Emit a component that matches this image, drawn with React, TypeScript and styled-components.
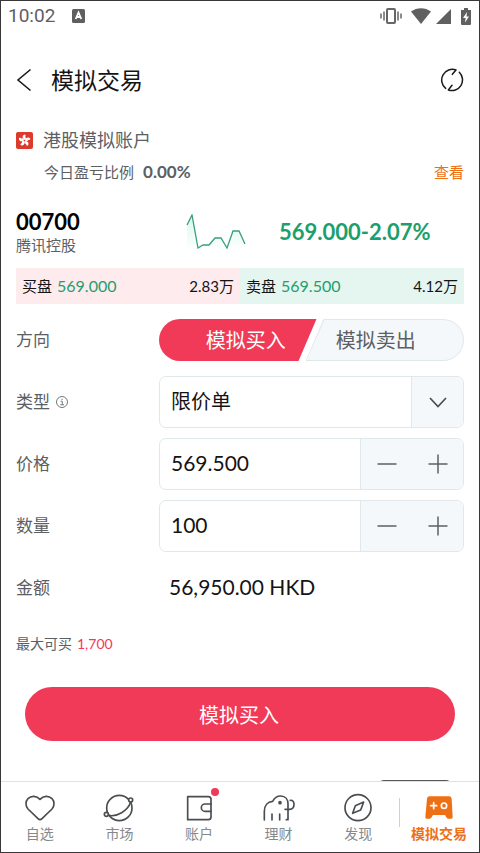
import React, { useState } from "react";
import styled, { createGlobalStyle, css } from "styled-components";

const color = {
  ink: "#141414",
  text: "#5b6064",
  muted: "#84898d",
  line: "#e1e8eb",
  panel: "#f5f8fa",
  red: "#f03a57",
  green: "#1c9f6c",
  orange: "#ee7015",
};

const GlobalStyle = createGlobalStyle`
  * { box-sizing: border-box; }
  body {
    margin: 0;
    background: #fff;
    color: ${color.ink};
    font-family: Lato, "Noto Sans CJK SC", sans-serif;
  }
  button, input, select { font: inherit; color: inherit; }
  button { padding: 0; border: 0; background: none; cursor: pointer; }
  svg { display: block; flex: none; }
`;

const Screen = styled.div`
  display: flex;
  flex-direction: column;
  height: 100vh;
  border: 1px solid #3a3739;
  background: #fff;
`;

const StatusBar = styled.div`
  flex: none;
  display: flex;
  align-items: center;
  height: 30px;
  padding: 0 8px 0 7px;
  color: #5f5f5f;
  font: 19px/30px Roboto, sans-serif;
`;

const StatusBadge = styled.svg`
  margin-left: 17px;
`;

const StatusIcons = styled.div`
  display: flex;
  align-items: center;
  gap: 5px;
  margin-left: auto;
`;

const VibrateIcon = styled.svg`
  margin-right: 3px;
`;

const BatteryIcon = styled.svg`
  margin-left: 5px;
`;

const Header = styled.header`
  flex: none;
  display: flex;
  align-items: center;
  height: 52px;
  margin-top: 23px;
  padding: 0 15px;
`;

const Title = styled.h1`
  flex: 1;
  margin: 0 0 0 17px;
  font-size: 23px;
  font-weight: 400;
  line-height: 32px;
`;

const Content = styled.main`
  flex: 1;
  min-height: 0;
  overflow: hidden;
  padding: 18px 15px 0;
`;

const Account = styled.section`
  display: grid;
  grid-template-columns: 18px 1fr auto;
  column-gap: 9px;
  align-items: center;
  color: ${color.text};
`;

const AccountName = styled.h2`
  grid-column: 2 / 4;
  margin: 0;
  font-size: 18px;
  font-weight: 400;
  line-height: 32px;
`;

const AccountRatio = styled.div`
  grid-column: 2;
  display: flex;
  gap: 9px;
  padding-left: 1px;
  font-size: 15px;
  line-height: 32px;

  strong { font-size: 17px; }
`;

const ViewLink = styled.a`
  color: ${color.orange};
  font-size: 15px;
  line-height: 32px;
  text-decoration: none;
`;

const Stock = styled.section`
  display: grid;
  grid-template-columns: 170px 93px 1fr;
  align-items: center;
  height: 48px;
  margin: 20px 0 12px;
`;

const StockCode = styled.div`
  color: #000;
  font-size: 22px;
  font-weight: 700;
  line-height: 26px;
`;

const StockName = styled.div`
  color: ${color.text};
  font-size: 15px;
  line-height: 20px;
`;

const StockQuote = styled.div`
  color: ${color.green};
  font-size: 22px;
  font-weight: 700;
  line-height: 26px;
`;

const Depth = styled.section`
  display: grid;
  grid-template-columns: 1fr 1fr;
`;

const DepthSide = styled.div<{ $side: "bid" | "ask" }>`
  display: flex;
  gap: 5px;
  padding: 0 6px;
  background: ${(p) => (p.$side === "bid" ? "#fdebee" : "#e5f5f0")};
  font-size: 15px;
  line-height: 36px;
`;

const DepthPrice = styled.span`
  flex: 1;
  color: ${color.green};
  font-size: 16px;
`;

const Form = styled.form`
  display: grid;
  gap: 10px;
  padding-top: 10px;
`;

const Field = styled.div`
  display: grid;
  grid-template-columns: 143px 1fr;
  align-items: center;
  height: 52px;
`;

const FieldLabel = styled.label`
  display: flex;
  align-items: center;
  gap: 6px;
  color: ${color.text};
  font-size: 17px;
  line-height: 24px;
`;

const Segments = styled.div`
  display: grid;
  grid-template-columns: 1fr 1fr;
  height: 42px;
`;

const segment = css`
  height: 42px;
  font-size: 20px;
  line-height: 42px;
`;

const BuySegment = styled.button`
  ${segment}
  margin-right: -5px;
  padding-left: 16px;
  border-radius: 21px 0 0 21px;
  background: ${color.red};
  color: #fff;
  clip-path: polygon(0 0, 100% 0, calc(100% - 18px) 100%, 0 100%);
`;

const SellSegment = styled.button`
  ${segment}
  position: relative;
  z-index: 0;
  margin-left: -6px;
  padding-right: 18px;
  border-radius: 0 21px 21px 0;
  background: ${color.line};
  color: ${color.text};
  clip-path: polygon(18px 0, 100% 0, 100% 100%, 0 100%);

  &::before {
    content: "";
    position: absolute;
    inset: 1px;
    z-index: -1;
    border-radius: 0 20px 20px 0;
    background: ${color.panel};
    clip-path: polygon(18px 0, 100% 0, 100% 100%, 0 100%);
  }
`;

const Box = styled.div`
  display: grid;
  grid-template-columns: 1fr auto;
  height: 52px;
  border: 1px solid ${color.line};
  border-radius: 7px;
  overflow: hidden;
`;

const TypeSelect = styled.select`
  grid-area: 1 / 1 / 2 / 3;
  width: 100%;
  padding: 0 62px 2px 11px;
  border: 0;
  background: transparent;
  font-size: 20px;
  appearance: none;
`;

const SelectArrow = styled.span`
  grid-area: 1 / 2;
  display: grid;
  place-items: center;
  width: 52px;
  border-left: 1px solid ${color.line};
  background: ${color.panel};
  pointer-events: none;
`;

const NumberInput = styled.input`
  width: 100%;
  min-width: 0;
  padding: 0 11px 4px;
  border: 0;
  background: transparent;
  font-size: 21px;
`;

const Stepper = styled.div`
  display: grid;
  grid-template-columns: 51px 51px;
  border-left: 1px solid ${color.line};
  background: ${color.panel};
`;

const StepButton = styled.button`
  display: grid;
  place-items: center;
`;

const Amount = styled.output`
  padding: 0 0 4px 10px;
  font-size: 21px;
`;

const MaxBuy = styled.p`
  margin: 10px 0 0;
  color: ${color.text};
  font-size: 14px;
  line-height: 20px;

  span { margin-left: 5px; color: ${color.red}; }
`;

const Submit = styled.button`
  display: block;
  width: calc(100% - 18px);
  height: 54px;
  margin: 33px auto 39px;
  padding: 0 2px 0 0;
  border-radius: 27px;
  background: ${color.red};
  color: #fff;
  font-size: 20px;
`;

const PeekHandle = styled.div`
  width: 74px;
  height: 12px;
  margin: 0 12px 0 auto;
  border-radius: 6px;
  background: #55585a;
`;

const Nav = styled.nav`
  flex: none;
  display: grid;
  grid-template-columns: repeat(5, 1fr) 80px;
  height: 71px;
  border-top: 1px solid #dfe1e2;
`;

const NavItem = styled.a<{ $active?: boolean }>`
  position: relative;
  display: flex;
  flex-direction: column;
  align-items: center;
  padding: 10px ${(p) => (p.$active ? 0 : 2)}px 0 0;
  color: ${(p) => (p.$active ? color.orange : color.muted)};
  font-size: 14px;
  font-weight: ${(p) => (p.$active ? 700 : 400)};
  line-height: 20px;
  text-decoration: none;

  ${(p) =>
    p.$active &&
    css`
      &::before {
        content: "";
        position: absolute;
        left: 0;
        top: 16px;
        height: 29px;
        border-left: 1px solid #d0d3d5;
      }
    `}
`;

const IconWrap = styled.span`
  position: relative;
  color: #4a4e51;
`;

const Dot = styled.i`
  position: absolute;
  top: -4px;
  right: -4px;
  width: 8px;
  height: 8px;
  border-radius: 50%;
  background: ${color.red};
`;

const NavSvg = ({ children }: { children: React.ReactNode }) => (
  <svg width="32" height="32" viewBox="0 0 96 96" fill="none" stroke="currentColor" strokeWidth="5" strokeLinecap="round" strokeLinejoin="round" aria-hidden="true">
    {children}
  </svg>
);

const navItems = [
  {
    label: "自选",
    icon: <path d="M48 83C46 83 44 82 42 80L12 51C4 42 4 28 12 20C22 10 38 11 48 22C58 11 74 10 84 20C92 28 92 42 84 51L54 80C52 82 50 83 48 83Z" />,
  },
  {
    label: "市场",
    icon: (
      <>
        <circle cx="49" cy="48" r="38" />
        <path d="M16 70C42 76 74 56 83 31" />
        <circle cx="10" cy="67" r="6" fill="#fff" />
        <circle cx="83" cy="24" r="6" fill="#fff" />
      </>
    ),
  },
  {
    label: "账户",
    dot: true,
    icon: (
      <>
        <path d="M14 14H76Q84 14 84 22V75Q84 83 76 83H14Z" />
        <path d="M84 36H66A11 11 0 0 0 66 58H84" />
      </>
    ),
  },
  {
    label: "理财",
    icon: (
      <>
        <path d="M4 84V58C4 40 14 29 29 28C34 18 42 12 53 12C67 12 75 22 75 36V83H70" />
        <path d="M66 52H80C89 52 93 46 93 37C93 29 89 24 82 25" />
        <path d="M27 66V84M50 66V84" />
        <circle cx="51" cy="32" r="3" fill="currentColor" />
      </>
    ),
  },
  {
    label: "发现",
    icon: (
      <>
        <circle cx="48" cy="47" r="39" />
        <path d="M65 30L56 54L32 64L40 41Z" />
      </>
    ),
  },
  {
    label: "模拟交易",
    active: true,
    icon: (
      <>
        <path
          fill={color.orange}
          stroke="none"
          d="M20 13H78Q85 13 86 20L89 76Q89 80 85 80H75Q72 80 70 76L66 69H30L26 76Q24 80 20 80H11Q7 80 7 76L12 20Q13 13 20 13Z"
        />
        <path d="M32 32V50M23 41H41" stroke="#fff" strokeWidth="5" />
        <circle cx="63" cy="41" r="8" stroke="#fff" strokeWidth="5" />
      </>
    ),
  },
];

const MinusIcon = () => (
  <svg width="20" height="20" stroke="#5b6064" strokeWidth="1.5" aria-hidden="true">
    <path d="M0.5 10H19.5" />
  </svg>
);

const PlusIcon = () => (
  <svg width="20" height="20" stroke="#5b6064" strokeWidth="1.5" aria-hidden="true">
    <path d="M0.5 10H19.5M10 0.5V19.5" />
  </svg>
);

type NumberFieldProps = {
  id: string;
  label: string;
  value: number;
  step: number;
  digits: number;
  onChange: (value: number) => void;
};

const NumberField = ({ id, label, value, step, digits, onChange }: NumberFieldProps) => (
  <Field>
    <FieldLabel htmlFor={id}>{label}</FieldLabel>
    <Box>
      <NumberInput id={id} inputMode="decimal" value={value.toFixed(digits)} onChange={(e) => onChange(Number(e.target.value) || 0)} />
      <Stepper>
        <StepButton type="button" aria-label={`${label} -`} onClick={() => onChange(Math.max(0, value - step))}>
          <MinusIcon />
        </StepButton>
        <StepButton type="button" aria-label={`${label} +`} onClick={() => onChange(value + step)}>
          <PlusIcon />
        </StepButton>
      </Stepper>
    </Box>
  </Field>
);

export default function App() {
  const [price, setPrice] = useState(569.5);
  const [quantity, setQuantity] = useState(100);
  const amount = (price * quantity).toLocaleString("en-US", { minimumFractionDigits: 2, maximumFractionDigits: 2 });

  return (
    <Screen>
      <GlobalStyle />
      <StatusBar>
        <span>10:02</span>
        <StatusBadge width="13" height="14" viewBox="0 0 13 14" aria-hidden="true">
          <rect width="13" height="14" rx="1.5" fill="#5f5f5f" />
          <path d="M3.7 10L6.5 3.5L9.3 10M4.8 8H8.2" fill="none" stroke="#fff" strokeWidth="1.8" />
        </StatusBadge>
        <StatusIcons>
          <VibrateIcon width="24" height="18" viewBox="0 0 24 18" fill="none" stroke="#666" strokeWidth="1.5" aria-hidden="true">
            <rect x="8" y="2" width="8" height="14" rx="1" strokeWidth="2" />
            <path d="M5 4.5V13.5M2 6.5V11.5M19 4.5V13.5M22 6.5V11.5" />
          </VibrateIcon>
          <svg width="20" height="16" viewBox="0 0 20 16" fill="#606060" aria-hidden="true">
            <path d="M0 3.5C6-1 14-1 20 3.5L10 16Z" />
          </svg>
          <svg width="15" height="15" viewBox="0 0 15 15" fill="#606060" aria-hidden="true">
            <path d="M15 0V15H0Z" />
          </svg>
          <BatteryIcon width="10" height="17" viewBox="0 0 10 17" aria-hidden="true">
            <path d="M3 0H7V2H10V16Q10 17 9 17H1Q0 17 0 16V2H3Z" fill="#606060" />
            <path d="M6 4L2 10H4.600L4 14.500L8 8.500H5.500Z" fill="#fff" />
          </BatteryIcon>
        </StatusIcons>
      </StatusBar>

      <Header>
        <button type="button" aria-label="返回">
          <svg width="18" height="24" viewBox="0 0 18 24" fill="none" stroke="#1a1a1a" strokeWidth="1.6" aria-hidden="true">
            <path d="M14.500 1.500L2 12L14.500 22.500" />
          </svg>
        </button>
        <Title>模拟交易</Title>
        <button type="button" aria-label="刷新">
          <svg width="24" height="24" viewBox="0 0 72 72" fill="none" stroke="#1a1a1a" strokeWidth="4.5" strokeLinecap="round" strokeLinejoin="round" aria-hidden="true">
            <path d="M17 61A32 32 0 0 1 48 6L37 19" />
            <path d="M58 13A32 32 0 0 1 25 66L36 52" />
          </svg>
        </button>
      </Header>

      <Content>
        <Account>
          <svg width="17" height="17" viewBox="0 0 34 34" aria-hidden="true">
            <rect width="34" height="34" rx="4" fill="#dc3a2c" />
            <g fill="#fff">
              {[0, 72, 144, 216, 288].map((angle) => (
                <path key={angle} transform={`rotate(${angle} 17 17)`} d="M17 16C12 13 12 6 18 5C21 7 17 10 20 12C20 14 19 15 17 16Z" />
              ))}
            </g>
          </svg>
          <AccountName>港股模拟账户</AccountName>
          <AccountRatio>
            今日盈亏比例 <strong>0.00%</strong>
          </AccountRatio>
          <ViewLink href="#account">查看</ViewLink>
        </Account>

        <Stock>
          <div>
            <StockCode>00700</StockCode>
            <StockName>腾讯控股</StockName>
          </div>
          <svg width="60" height="36" viewBox="0 0 60 36" fill="none" aria-hidden="true">
            <defs>
              <linearGradient id="trend" x1="0" y1="0" x2="0" y2="1">
                <stop offset="0" stopColor="#d5f7ea" />
                <stop offset="1" stopColor="#fff" />
              </linearGradient>
            </defs>
            <path fill="url(#trend)" d="M1 11L6 1L12 34L17 31H23L29 24H36L41 34L47 17H53L59 30V36H1Z" />
            <path stroke="#3a9f7c" strokeWidth="1.3" d="M1 11L6 1L12 34L17 31H23L29 24H35L41 34L47 17H53L59 30" />
          </svg>
          <StockQuote>569.000-2.07%</StockQuote>
        </Stock>

        <Depth>
          <DepthSide $side="bid">
            <span>买盘</span>
            <DepthPrice>569.000</DepthPrice>
            <span>2.83万</span>
          </DepthSide>
          <DepthSide $side="ask">
            <span>卖盘</span>
            <DepthPrice>569.500</DepthPrice>
            <span>4.12万</span>
          </DepthSide>
        </Depth>

        <Form onSubmit={(e) => e.preventDefault()}>
          <Field>
            <FieldLabel as="span" id="side">方向</FieldLabel>
            <Segments role="group" aria-labelledby="side">
              <BuySegment type="button" aria-pressed="true">模拟买入</BuySegment>
              <SellSegment type="button" aria-pressed="false">模拟卖出</SellSegment>
            </Segments>
          </Field>
          <Field>
            <FieldLabel htmlFor="type">
              类型
              <svg width="12" height="12" viewBox="0 0 24 24" fill="none" stroke="#74797d" strokeWidth="2" aria-hidden="true">
                <circle cx="12" cy="12" r="11" />
                <path d="M9 10.500H12.500V17.500M8.500 17.500H16M12 5.500V8" />
              </svg>
            </FieldLabel>
            <Box>
              <TypeSelect id="type">
                <option>限价单</option>
              </TypeSelect>
              <SelectArrow>
                <svg width="18" height="11" viewBox="0 0 18 11" fill="none" stroke="#4a4e51" strokeWidth="1.7" aria-hidden="true">
                  <path d="M1 1L9 9.500L17 1" />
                </svg>
              </SelectArrow>
            </Box>
          </Field>
          <NumberField id="price" label="价格" value={price} step={0.5} digits={3} onChange={setPrice} />
          <NumberField id="quantity" label="数量" value={quantity} step={100} digits={0} onChange={setQuantity} />
          <Field>
            <FieldLabel htmlFor="amount">金额</FieldLabel>
            <Amount id="amount">{amount} HKD</Amount>
          </Field>
          <div>
            <MaxBuy>
              最大可买<span>1,700</span>
            </MaxBuy>
            <Submit type="submit">模拟买入</Submit>
            <PeekHandle />
          </div>
        </Form>
      </Content>

      <Nav>
        {navItems.map((item) => (
          <NavItem key={item.label} href={`#${item.label}`} $active={item.active}>
            <IconWrap>
              <NavSvg>{item.icon}</NavSvg>
              {item.dot && <Dot />}
            </IconWrap>
            {item.label}
          </NavItem>
        ))}
      </Nav>
    </Screen>
  );
}
